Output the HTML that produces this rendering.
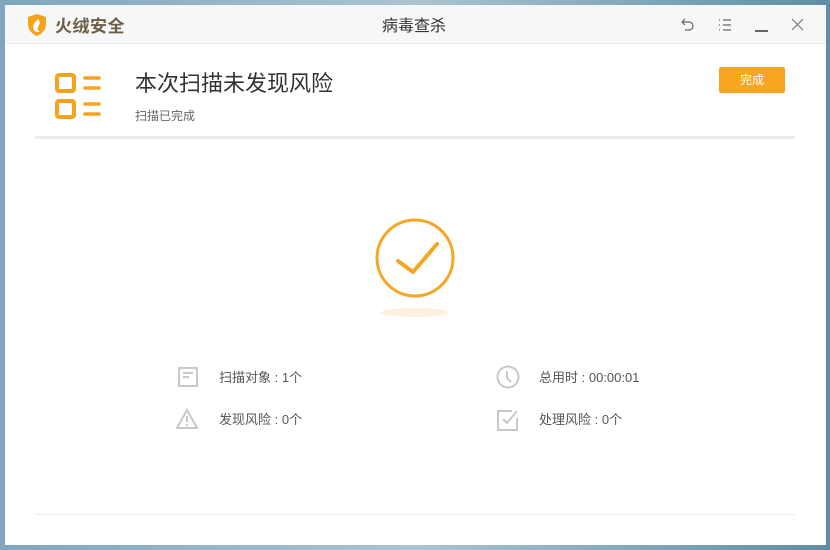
<!DOCTYPE html>
<html><head><meta charset="utf-8"><style>
*{margin:0;padding:0;box-sizing:border-box}
body{width:830px;height:550px;overflow:hidden;background:linear-gradient(90deg,#7fa6bf,#a9c4d3 50%,#5f8ea6);font-family:"Liberation Sans","Noto Sans CJK SC",sans-serif;position:relative}
.win{position:absolute;left:5px;top:5px;width:821px;height:540px;background:#fff}
.tb{position:absolute;left:0;top:0;width:100%;height:39px;background:#f6f7f7;border-bottom:1px solid #ececec}
.abs{position:absolute}
.t{color:#555;white-space:nowrap}
.sep{position:absolute;left:30px;width:760px;background:#ececec}
</style></head><body>
<div class="win">
 <div class="tb">
  <svg class="abs" style="left:22px;top:8px" width="20" height="24" viewBox="0 0 20 24"><path d="M10 1L1 4v7c0 6 4 10 9 12 5-2 9-6 9-12V4z" fill="#f7a21b"/><path d="M11 6c-4 4-6 7-4 11 1 2 4 3 6 1-3 0-3-3-1-6 1-2 1-4-1-6z" fill="#fff"/></svg>
  <div class="abs" style="left:50px;top:7px;font-size:17px;font-weight:bold;color:#6e5d45;letter-spacing:0.5px">火绒安全</div>
  <div class="abs t" style="left:377px;top:7px;font-size:16px;color:#333">病毒查杀</div>
  <svg class="abs" style="left:675px;top:12px" width="16" height="16" viewBox="0 0 16 16" fill="none" stroke="#666" stroke-width="1.2"><path d="M5 2L2 5l3 3M2 5h7a4 4 0 010 8H5"/></svg>
  <svg class="abs" style="left:712px;top:12px" width="16" height="16" viewBox="0 0 16 16" stroke="#666" stroke-width="1.2"><path d="M2 3h1M2 8h1M2 13h1M6 3h8M6 8h8M6 13h8"/></svg>
  <div class="abs" style="left:750px;top:25px;width:13px;height:1.5px;background:#666"></div>
  <svg class="abs" style="left:786px;top:13px" width="13" height="13" viewBox="0 0 13 13" stroke="#777" stroke-width="1.2"><path d="M1 1l11 11M12 1L1 12"/></svg>
 </div>
 <svg class="abs" style="left:45px;top:65px" width="54" height="50" viewBox="0 0 54 50" fill="none" stroke="#f7a21b" stroke-width="4"><rect x="7" y="5" width="17" height="16" rx="2"/><rect x="7" y="31" width="17" height="16" rx="2"/><path d="M35 8h14M35 18h14M35 34h14M35 44h14" stroke-linecap="round" stroke-width="3.5"/></svg>
 <div class="abs t" style="left:130px;top:61px;font-size:22px;color:#333">本次扫描未发现风险</div>
 <div class="abs t" style="left:130px;top:102px;font-size:12px;color:#666">扫描已完成</div>
 <div class="abs" style="left:714px;top:62px;width:66px;height:26px;background:#f7a621;border-radius:2px;color:#fff;font-size:12px;text-align:center;line-height:26px">完成</div>
 <div class="sep" style="top:131px;height:3px"></div>
 <svg class="abs" style="left:370px;top:213px" width="80" height="80" viewBox="0 0 80 80" fill="none" stroke="#f7a621" stroke-width="3"><circle cx="40" cy="40" r="38"/><path d="M23 43l15 11 24-28" stroke-width="4" stroke-linecap="round" stroke-linejoin="round"/></svg>
 <div class="abs" style="left:376px;top:303px;width:68px;height:9px;border-radius:50%;background:#fdf0dc"></div>
 <svg class="abs" style="left:172px;top:361px" width="22" height="22" viewBox="0 0 22 22" fill="none" stroke="#c8c8c8" stroke-width="2"><rect x="2" y="2" width="18" height="18"/><path d="M6 7h10M6 11h6"/></svg>
 <div class="abs t" style="left:214px;top:362px;font-size:13px">扫描对象 : 1个</div>
 <svg class="abs" style="left:170px;top:403px" width="24" height="22" viewBox="0 0 24 22" fill="none" stroke="#c8c8c8" stroke-width="2"><path d="M12 2L2 20h20z"/><path d="M12 8v6M12 16v2"/></svg>
 <div class="abs t" style="left:214px;top:404px;font-size:13px">发现风险 : 0个</div>
 <svg class="abs" style="left:491px;top:360px" width="24" height="24" viewBox="0 0 24 24" fill="none" stroke="#c8c8c8" stroke-width="2"><circle cx="12" cy="12" r="10.5"/><path d="M11 6v7l4 4"/></svg>
 <div class="abs t" style="left:534px;top:362px;font-size:13px">总用时 : 00:00:01</div>
 <svg class="abs" style="left:491px;top:403px" width="24" height="24" viewBox="0 0 24 24" fill="none" stroke="#c8c8c8" stroke-width="2"><path d="M16 3H2v19h19V10"/><path d="M7 11l4 4 10-12"/></svg>
 <div class="abs t" style="left:534px;top:404px;font-size:13px">处理风险 : 0个</div>
 <div class="sep" style="top:509px;height:1px"></div>
</div>
</body></html>
